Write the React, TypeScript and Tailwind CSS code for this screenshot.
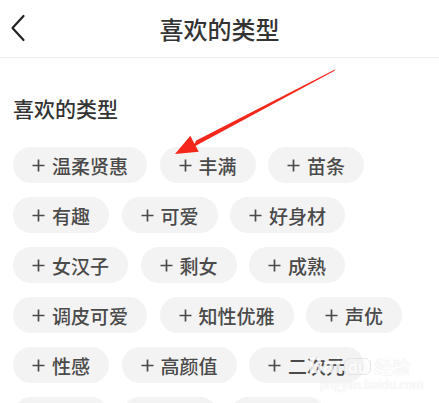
const rows: string[] = [
  "温柔贤惠", "丰满", "苗条",
  "有趣", "可爱", "好身材",
  "女汉子", "剩女", "成熟",
  "调皮可爱", "知性优雅", "声优",
  "性感", "高颜值", "二次元",
];

function PlusIcon() {
  return (
    <svg width="13" height="13" viewBox="0 0 13 13" className="shrink-0">
      <path d="M6.5 0.5V12.5M0.5 6.5H12.5" stroke="#4a4a4a" strokeWidth="1.7" />
    </svg>
  );
}

function Chip({ label }: { label: string }) {
  return (
    <div className="h-[36px] rounded-full bg-[#f3f3f3] px-[19px] flex items-center gap-[7px] text-[19px] leading-none font-medium text-[#4a4a4a]">
      <PlusIcon />
      <span>{label}</span>
    </div>
  );
}

export default function App() {
  return (
    <div
      className="relative w-[439px] h-[403px] overflow-hidden bg-white"
      style={{ fontFamily: '"Noto Sans CJK SC", "Noto Sans", sans-serif' }}
    >
      {/* header */}
      <div className="relative h-[58px] border-b border-[#ececec] flex items-center justify-center">
        <svg width="16" height="28" viewBox="0 0 16 28" className="absolute left-[10px] top-[14px]">
          <path d="M13.5 2L2.5 14L13.5 26" fill="none" stroke="#222" strokeWidth="2.2" strokeLinecap="round" strokeLinejoin="round" />
        </svg>
        <span className="text-[24px] leading-none font-medium text-[#333]">喜欢的类型</span>
      </div>

      {/* content */}
      <div className="px-[13px] pt-[40px]">
        <div className="text-[21px] leading-[21px] font-medium text-[#333] mb-[28px]">喜欢的类型</div>
        <div className="flex flex-wrap gap-x-[12.5px] gap-y-[14px] w-[413px]">
          {rows.map((r) => (
            <Chip key={r} label={r} />
          ))}
          {/* next row, only the tops show */}
          <div className="h-[36px] w-[96px] rounded-full bg-[#f3f3f3]" />
          <div className="h-[36px] w-[96px] rounded-full bg-[#f3f3f3]" />
          <div className="h-[36px] w-[96px] rounded-full bg-[#f3f3f3]" />
        </div>
      </div>

      {/* red arrow annotation */}
      <svg width="439" height="403" className="absolute left-0 top-0 pointer-events-none">
        <polygon points="335.4,69.3 334.6,70.7 192.5,147.5 196.3,140.5" fill="#f5261a" />
        <polygon points="175,154 190.3,135.8 198.7,151.8" fill="#f5261a" />
      </svg>

      {/* watermark */}
      <div className="absolute left-[308px] top-[354px] pointer-events-none select-none opacity-80">
        <div className="flex items-end gap-[3px] text-[21px] leading-none font-bold text-white" style={{ textShadow: "0 0 1px #d0d0d0" }}>
          <span>Bai</span>
          <span className="text-[15px] px-[3px] rounded-md border border-[#e2e2e2]">du</span>
          <span className="text-[18px] font-normal">经验</span>
        </div>
        <div className="mt-[3px] ml-[12px] text-[12px] leading-none text-white" style={{ textShadow: "0 0 1px #d0d0d0" }}>
          jingyan.baidu.com
        </div>
      </div>
    </div>
  );
}
